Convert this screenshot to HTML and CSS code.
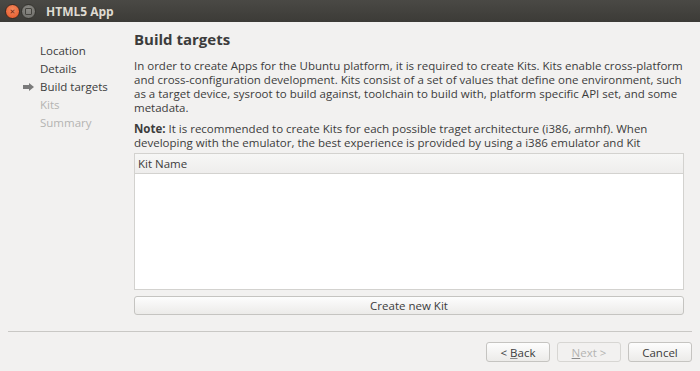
FILE: index.html
```html
<!DOCTYPE html>
<html lang="en">
<head>
    <meta charset="UTF-8">
    <title>HTML5 App</title>
    <link rel="stylesheet" href="styles.css">
</head>
<body>
<div class="window">
    <div class="titlebar">
        <span class="wbtn close">&#x2715;</span>
        <span class="wbtn mini"></span>
        <span class="title">HTML5 App</span>
    </div>
    <div class="main">
        <ul class="steps">
            <li>Location</li>
            <li>Details</li>
            <li class="current">Build targets</li>
            <li class="todo">Kits</li>
            <li class="todo">Summary</li>
        </ul>
        <div class="page">
            <h1>Build targets</h1>
            <p class="intro">In order to create Apps for the Ubuntu platform, it is required to create Kits. Kits enable cross-platform<br>
                and cross-configuration development. Kits consist of a set of values that define one environment, such<br>
                as a target device, sysroot to build against, toolchain to build with, platform specific API set, and some<br>
                metadata.</p>
            <p class="note"><b>Note:</b> It is recommended to create Kits for each possible traget architecture (i386, armhf). When<br>
                developing with the emulator, the best experience is provided by using a i386 emulator and Kit</p>
            <div class="kits">
                <div class="kits-head">Kit Name</div>
                <div class="kits-body"></div>
            </div>
            <button class="btn wide">Create new Kit</button>
        </div>
    </div>
    <div class="footer">
        <button class="btn">&lt; <u>B</u>ack</button>
        <button class="btn" disabled><u>N</u>ext &gt;</button>
        <button class="btn">Cancel</button>
    </div>
</div>
</body>
</html>
```

FILE: styles.css
```css
*{
    margin: 0;
    padding: 0;
    box-sizing: border-box;
}
body{
    background-color: #f2f1f0;
    font-family: "Open Sans", "DejaVu Sans", sans-serif;
    font-size: 11.5px;
    color: #3c3c3c;
}
.window{
    width: 700px;
    height: 371px;
    overflow: hidden;
}
.titlebar{
    height: 22px;
    background: linear-gradient(#4a4945, #3c3b37);
    display: flex;
    align-items: center;
    padding-left: 5px;
}
.wbtn{
    width: 15px;
    height: 15px;
    border-radius: 50%;
    display: inline-flex;
    align-items: center;
    justify-content: center;
    margin-right: 1px;
}
.close{
    background: radial-gradient(circle at 50% 35%, #f58a5e, #e35527);
    color: #6a2814;
    font-size: 7px;
    font-weight: bold;
    border: 1px solid #3a2a22;
}
.mini{
    background: radial-gradient(circle at 50% 35%, #8c8b86, #6b6a66);
    border: 1px solid #35342f;
}
.mini::after{
    content: "";
    width: 5px;
    height: 5px;
    border: 1px solid #45443f;
    border-radius: 1px;
}
.title{
    margin-left: 9px;
    color: #dfdbd2;
    font-weight: bold;
    font-size: 12px;
}
.main{
    display: flex;
}
.steps{
    list-style: none;
    width: 134px;
    padding-top: 20px;
    padding-left: 40px;
}
.steps li{
    height: 18px;
    line-height: 18px;
    font-size: 11.5px;
    color: #3c3c3c;
    position: relative;
}
.steps li.current::before{
    content: "";
    position: absolute;
    left: -11px;
    top: 5px;
    width: 0;
    height: 0;
    border-left: 5px solid #7a7a7a;
    border-top: 4px solid transparent;
    border-bottom: 4px solid transparent;
}
.steps li.current::after{
    content: "";
    position: absolute;
    left: -17px;
    top: 7px;
    width: 6px;
    height: 4px;
    background: #7a7a7a;
}
.steps li.todo{
    color: #b4b4b2;
}
.page{
    width: 550px;
}
h1{
    font-size: 15px;
    font-weight: bold;
    color: #3c3c3c;
    margin-top: 6px;
    height: 22px;
    line-height: 22px;
}
.intro, .note{
    line-height: 14px;
    font-size: 11.5px;
    white-space: nowrap;
}
.intro{
    margin-top: 9px;
}
.note{
    margin-top: 7px;
}
.kits{
    margin-top: 3px;
    height: 137px;
    border: 1px solid #d3d2cf;
    background-color: #fff;
}
.kits-head{
    height: 20px;
    line-height: 19px;
    padding-left: 3px;
    font-size: 11.5px;
    background: linear-gradient(#f7f7f6, #eeedec);
    border-bottom: 1px solid #d3d2cf;
}
.btn{
    display: block;
    font-family: inherit;
    font-size: 11.5px;
    color: #3c3c3c;
    height: 20px;
    width: 64px;
    border: 1px solid #c5c4c1;
    border-radius: 3px;
    background: linear-gradient(#fdfdfd, #ecebe9);
}
.btn:disabled{
    color: #b4b4b2;
    background: #f2f1f0;
    border-color: #d7d6d3;
}
.btn u{
    text-decoration-color: #8a8a8a;
}
.wide{
    width: 550px;
    height: 19px;
    margin-top: 6px;
}
.footer{
    height: 50px;
    margin: 16px 8px 0 8px;
    border-top: 1px solid #c9c8c5;
    display: flex;
    justify-content: flex-end;
    gap: 7px;
    padding-top: 10px;
}
```
